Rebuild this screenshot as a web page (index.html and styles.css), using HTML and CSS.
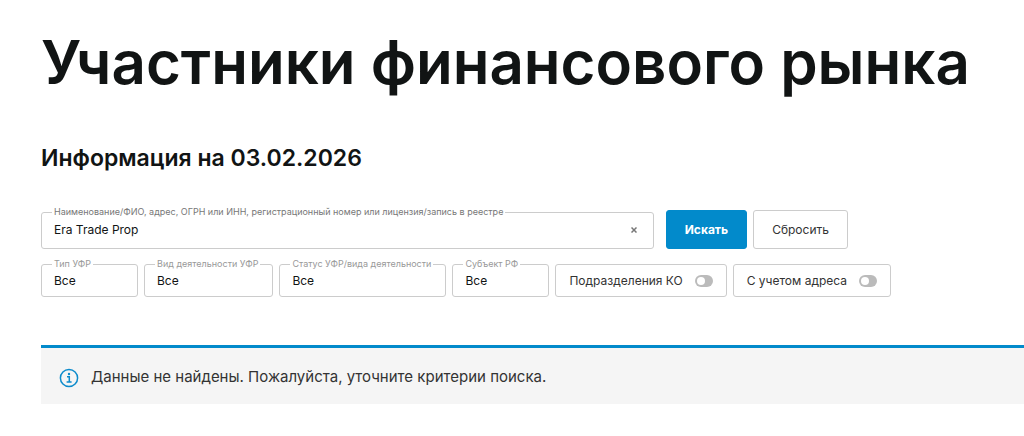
FILE: index.html
```html
<!DOCTYPE html>
<html lang="ru">
<head>
  <meta charset="UTF-8" />
  <meta name="viewport" content="width=device-width, initial-scale=1.0"/>
  <title>Участники финансового рынка</title>
  <link rel="stylesheet" href="styles.css">
</head>
<body>
  <main class="page">
    <h1>Участники финансового рынка</h1>
    <h2>Информация на 03.02.2026</h2>

    <form class="search-form">
      <div class="search-row">
        <fieldset class="field search-field">
          <legend><label for="query">Наименование/ФИО, адрес, ОГРН или ИНН, регистрационный номер или лицензия/запись в реестре</label></legend>
          <div class="search-control">
            <input id="query" class="search-input" type="text" value="Era Trade Prop">
            <button class="clear-btn" type="button" aria-label="Очистить">
              <svg width="6" height="6" viewBox="0 0 6 6"><path d="M.5 .5l5 5M5.5 .5l-5 5" stroke="#777" stroke-width="1.5"/></svg>
            </button>
          </div>
        </fieldset>
        <div class="buttons">
          <button class="btn btn-primary" type="submit">Искать</button>
          <button class="btn" type="reset">Сбросить</button>
        </div>
      </div>

      <div class="filters">
        <fieldset class="field filter">
          <legend><label for="type">Тип УФР</label></legend>
          <select id="type"><option>Все</option></select>
        </fieldset>
        <fieldset class="field filter">
          <legend><label for="activity">Вид деятельности УФР</label></legend>
          <select id="activity"><option>Все</option></select>
        </fieldset>
        <fieldset class="field filter">
          <legend><label for="status">Статус УФР/вида деятельности</label></legend>
          <select id="status"><option>Все</option></select>
        </fieldset>
        <fieldset class="field filter">
          <legend><label for="region">Субъект РФ</label></legend>
          <select id="region"><option>Все</option></select>
        </fieldset>
        <label class="toggle">
          <span>Подразделения КО</span>
          <input type="checkbox">
        </label>
        <label class="toggle">
          <span>С учетом адреса</span>
          <input type="checkbox">
        </label>
      </div>
    </form>

    <div class="notice" role="status">
      <svg class="notice-icon" width="20" height="20" viewBox="0 0 20 20" fill="none" stroke="#0d8bcb" stroke-width="1.5">
        <circle cx="10" cy="11" r="8.6"/>
        <path d="M8 9.8h2.3v5M7.6 15h5"/>
        <circle cx="10" cy="7" r="1.2" fill="#0d8bcb" stroke="none"/>
      </svg>
      <p>Данные не найдены. Пожалуйста, уточните критерии поиска.</p>
    </div>
  </main>
</body>
</html>
```
FILE: styles.css
```css
* {
  box-sizing: border-box;
}

body {
  margin: 0;
  background: #fff;
  color: #111414;
  font-family: Inter, "Liberation Sans", sans-serif;
  font-size: 12px;
}

.page {
  padding: 26px 0 32px 41px;
}

h1 {
  margin: 0;
  font-size: 60px;
  font-weight: 600;
  line-height: 72px;
}

h2 {
  margin: 44px 0 0;
  font-size: 23px;
  font-weight: 600;
  line-height: 32px;
}

input, select, button {
  font: inherit;
  color: inherit;
}

.search-form {
  margin-top: 33px;
}

.search-row {
  display: flex;
  align-items: flex-end;
  gap: 12px;
  max-width: 807px;
}

.field {
  min-width: 0;
  margin: 0;
  padding: 0 12px;
  border: 1px solid #ccc;
  border-radius: 3px;
}

.field legend {
  padding: 0 2px;
  margin-left: -2px;
  color: #777;
  font-size: 9px;
  line-height: 10px;
  white-space: nowrap;
}

.search-field {
  flex: 1;
}

.search-control {
  display: flex;
  align-items: center;
  height: 31px;
  padding-bottom: 5px;
}

.search-input {
  flex: 1;
  min-width: 0;
  padding: 0;
  border: 0;
  outline: none;
  background: none;
  line-height: 20px;
}

.clear-btn {
  display: flex;
  padding: 4px;
  border: 0;
  background: none;
  cursor: pointer;
}

.buttons {
  display: flex;
  gap: 6px;
}

.btn {
  height: 39px;
  padding: 0 18px;
  border: 1px solid #ccc;
  border-radius: 3px;
  background: #fff;
  color: #333;
  cursor: pointer;
}

.btn-primary {
  border-color: #028acb;
  background: #028acb;
  color: #fff;
  font-weight: 700;
}

.filters {
  display: flex;
  flex-wrap: wrap;
  align-items: flex-end;
  gap: 6px;
  margin-top: 10px;
}

.filter {
  min-width: 97px;
}

.filter legend {
  color: #999;
}

.filter select {
  display: block;
  width: 100%;
  height: 27px;
  padding: 0 0 4px;
  border: 0;
  outline: none;
  appearance: none;
  background: none;
}

.toggle {
  display: flex;
  align-items: center;
  gap: 12px;
  height: 33px;
  padding: 0 13px;
  border: 1px solid #ccc;
  border-radius: 3px;
  color: #333;
  cursor: pointer;
}

.toggle input {
  display: flex;
  align-items: center;
  width: 18px;
  height: 12px;
  margin: 0;
  padding: 2px;
  border-radius: 6px;
  appearance: none;
  background: #bbb;
}

.toggle input::before {
  content: "";
  width: 8px;
  height: 8px;
  border-radius: 50%;
  background: #fff;
}

.toggle input:checked {
  justify-content: flex-end;
  background: #028acb;
}

.notice {
  display: flex;
  align-items: center;
  gap: 12px;
  margin-top: 48px;
  padding: 16px 18px 14px;
  border-top: 3px solid #028acb;
  background: #f5f5f5;
  color: #333;
  font-size: 15px;
  line-height: 26px;
}

.notice-icon {
  overflow: visible;
}

.notice p {
  margin: 0;
}
```
